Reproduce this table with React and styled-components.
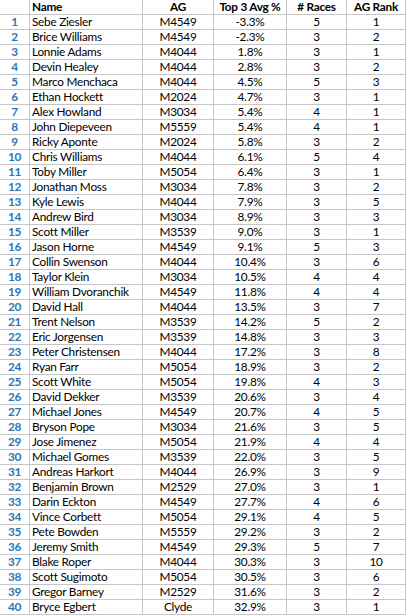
import React from "react";
import styled, { createGlobalStyle } from "styled-components";

const Global = createGlobalStyle`
  html, body { margin: 0; padding: 0; background: #ffffff; }
  body { font-family: Lato, "Liberation Sans", sans-serif; }
`;

const rows = [
  ["Sebe Ziesler", "M4549", "-3.3%", 5, 1],
  ["Brice Williams", "M4549", "-2.3%", 3, 2],
  ["Lonnie Adams", "M4044", "1.8%", 3, 1],
  ["Devin Healey", "M4044", "2.8%", 3, 2],
  ["Marco Menchaca", "M4044", "4.5%", 5, 3],
  ["Ethan Hockett", "M2024", "4.7%", 3, 1],
  ["Alex Howland", "M3034", "5.4%", 4, 1],
  ["John Diepeveen", "M5559", "5.4%", 4, 1],
  ["Ricky Aponte", "M2024", "5.8%", 3, 2],
  ["Chris Williams", "M4044", "6.1%", 5, 4],
  ["Toby Miller", "M5054", "6.4%", 3, 1],
  ["Jonathan Moss", "M3034", "7.8%", 3, 2],
  ["Kyle Lewis", "M4044", "7.9%", 3, 5],
  ["Andrew Bird", "M3034", "8.9%", 3, 3],
  ["Scott Miller", "M3539", "9.0%", 3, 1],
  ["Jason Horne", "M4549", "9.1%", 5, 3],
  ["Collin Swenson", "M4044", "10.4%", 3, 6],
  ["Taylor Klein", "M3034", "10.5%", 4, 4],
  ["William Dvoranchik", "M4549", "11.8%", 4, 4],
  ["David Hall", "M4044", "13.5%", 3, 7],
  ["Trent Nelson", "M3539", "14.2%", 5, 2],
  ["Eric Jorgensen", "M3539", "14.8%", 3, 3],
  ["Peter Christensen", "M4044", "17.2%", 3, 8],
  ["Ryan Farr", "M5054", "18.9%", 3, 2],
  ["Scott White", "M5054", "19.8%", 4, 3],
  ["David Dekker", "M3539", "20.6%", 3, 4],
  ["Michael Jones", "M4549", "20.7%", 4, 5],
  ["Bryson Pope", "M3034", "21.6%", 3, 5],
  ["Jose Jimenez", "M5054", "21.9%", 4, 4],
  ["Michael Gomes", "M3539", "22.0%", 3, 5],
  ["Andreas Harkort", "M4044", "26.9%", 3, 9],
  ["Benjamin Brown", "M2529", "27.0%", 3, 1],
  ["Darin Eckton", "M4549", "27.7%", 4, 6],
  ["Vince Corbett", "M5054", "29.1%", 4, 5],
  ["Pete Bowden", "M5559", "29.2%", 3, 2],
  ["Jeremy Smith", "M4549", "29.3%", 5, 7],
  ["Blake Roper", "M4044", "30.3%", 3, 10],
  ["Scott Sugimoto", "M5054", "30.5%", 3, 6],
  ["Gregor Barney", "M2529", "31.6%", 3, 2],
  ["Bryce Egbert", "Clyde", "32.9%", 3, 1],
];

const Sheet = styled.div`
  width: 406px;
  display: flex;
  flex-direction: column;
  font-family: Lato, "Liberation Sans", sans-serif;
  font-size: 11.8px;
  letter-spacing: -0.25px;
  color: #000;
`;

const Row = styled.div`
  display: grid;
  grid-template-columns: 29px 113px 71px 73px 60px 60px;
  height: 14px;
  border-bottom: 1px solid #c6c6c6;
`;

const Cell = styled.div`
  line-height: 14px;
  height: 14px;
  white-space: nowrap;
  overflow: hidden;
  text-align: ${(p) => (p.$left ? "left" : "center")};
  padding-left: ${(p) => (p.$left ? "2px" : "0")};
  border-left: ${(p) => (p.$first ? "none" : "1px solid #c6c6c6")};
  border-right: ${(p) => (p.$last ? "1px solid #c6c6c6" : "none")};
  font-weight: ${(p) => (p.$bold ? 700 : 400)};
`;

const NumCell = styled(Cell)`
  color: #2e75b6;
  font-weight: 700;
`;

export default function App() {
  return (
    <>
      <Global />
      <Sheet>
        <Row>
          <Cell $first />
          <Cell $left $bold>Name</Cell>
          <Cell $bold>AG</Cell>
          <Cell $bold>Top 3 Avg %</Cell>
          <Cell $bold># Races</Cell>
          <Cell $bold $last>AG Rank</Cell>
        </Row>
        {rows.map((r, i) => (
          <Row key={i}>
            <NumCell $first>{i + 1}</NumCell>
            <Cell $left>{r[0]}</Cell>
            <Cell>{r[1]}</Cell>
            <Cell>{r[2]}</Cell>
            <Cell>{r[3]}</Cell>
            <Cell $last>{r[4]}</Cell>
          </Row>
        ))}
      </Sheet>
    </>
  );
}
